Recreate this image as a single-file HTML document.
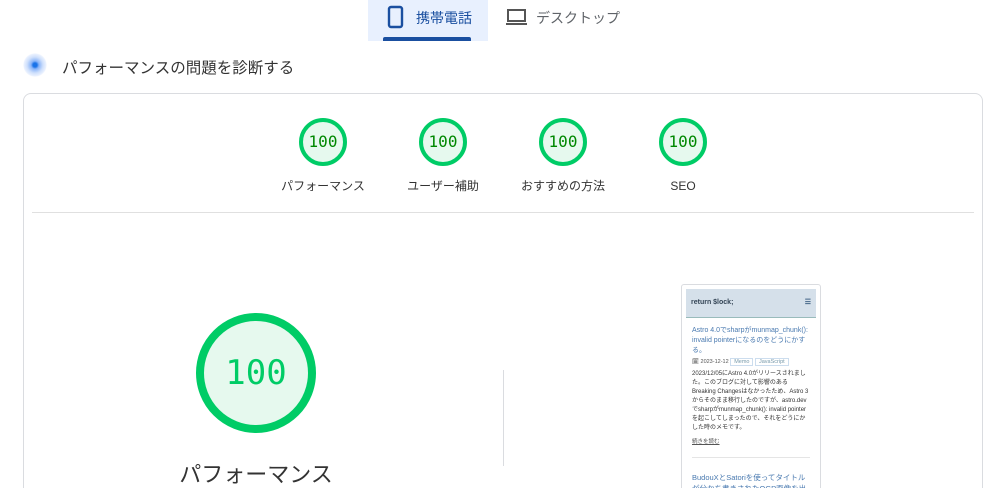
<!DOCTYPE html>
<html><head><meta charset="utf-8"><style>
html,body{margin:0;width:1003px;height:488px;overflow:hidden}
body{background:#fff;font-family:"Liberation Sans","Noto Sans CJK JP",sans-serif;position:relative;color:#202124}
.a{position:absolute}
.g{position:absolute;width:40px;height:40px;border:4px solid #0c6;border-radius:50%;background:#e6f9ee;color:#080;font-family:"DejaVu Sans Mono","Liberation Mono",monospace;font-size:16px;line-height:40px;text-align:center}
.lb{position:absolute;width:140px;text-align:center;font-size:12px;color:#333;top:178px;line-height:16px}
.sm{font-size:5.5px;color:#555;line-height:9px}
</style></head><body>
<div class="a" style="left:368px;top:0;width:120px;height:41px;background:#e8f0fe"></div>
<div class="a" style="left:383px;top:37px;width:88px;height:4px;background:#1a4fa0;border-radius:2px 2px 0 0"></div>
<svg class="a" style="left:386px;top:5px" width="20" height="24"><rect x="3" y="2" width="13" height="20" rx="2" fill="none" stroke="#1a4fa0" stroke-width="2.4"/></svg>
<div class="a" style="left:416px;top:8px;font-size:14px;color:#1a4fa0">携帯電話</div>
<svg class="a" style="left:505px;top:7px" width="24" height="20"><rect x="3" y="3" width="17" height="11" fill="none" stroke="#555" stroke-width="2"/><rect x="1" y="16" width="21" height="2" fill="#555"/></svg>
<div class="a" style="left:536px;top:8px;font-size:14px;color:#5f6368">デスクトップ</div>
<div class="a" style="left:23px;top:53px;width:24px;height:24px;border-radius:50%;background:radial-gradient(circle,#1a73e8 0,#1a73e8 2px,#8ab4f8 4px,#cfe0fc 8px,#eaf1fe 11px,#fff 12px)"></div>
<div class="a" style="left:62px;top:56px;font-size:15.5px;color:#333">パフォーマンスの問題を診断する</div>
<div class="a" style="left:23px;top:93px;width:958px;height:420px;border:1px solid #dadce0;border-radius:8px"></div>
<div class="g" style="left:299px;top:118px">100</div>
<div class="g" style="left:419px;top:118px">100</div>
<div class="g" style="left:539px;top:118px">100</div>
<div class="g" style="left:659px;top:118px">100</div>
<div class="lb" style="left:253px">パフォーマンス</div>
<div class="lb" style="left:373px">ユーザー補助</div>
<div class="lb" style="left:493px">おすすめの方法</div>
<div class="lb" style="left:613px">SEO</div>
<div class="a" style="left:32px;top:212px;width:942px;height:1px;background:#e0e0e0"></div>
<div class="a" style="left:196px;top:313px;width:104px;height:104px;border:8px solid #0c6;border-radius:50%;background:#e6f9ee;color:#0c6;font-family:'DejaVu Sans Mono','Liberation Mono',monospace;font-size:34px;line-height:104px;text-align:center">100</div>
<div class="a" style="left:156px;top:457px;width:200px;text-align:center;font-size:22px;color:#333">パフォーマンス</div>
<div class="a" style="left:503px;top:370px;width:1px;height:96px;background:#dadce0"></div>
<div class="a" style="left:681px;top:284px;width:138px;height:220px;border:1px solid #dadce0;border-radius:3px;overflow:hidden;background:#fff">
 <div style="height:28px;background:#d5e0ea;border-bottom:1px solid #9bb;margin:4px 4px 0;font-size:7px;font-weight:bold;color:#345;line-height:28px;padding-left:5px">return $lock;<span style="float:right;margin-right:5px;color:#468">☰</span></div>
 <div style="padding:8px 10px 0 10px">
  <div style="font-size:7px;color:#4a7ab0;line-height:10px">Astro 4.0でsharpがmunmap_chunk(): invalid pointerになるのをどうにかする。</div>
  <div class="sm" style="margin-top:2px">🗓 2023-12-12 <span style="border:1px solid #cde;color:#79a;padding:0 3px">Memo</span> <span style="border:1px solid #cde;color:#79a;padding:0 3px">JavaScript</span></div>
  <div class="sm" style="margin-top:3px;color:#333;font-size:6px">2023/12/05にAstro 4.0がリリースされました。このブログに対して影響のあるBreaking Changesはなかったため、Astro 3からそのまま移行したのですが、astro.devでsharpがmunmap_chunk(): invalid pointerを起こしてしまったので、それをどうにかした時のメモです。</div>
  <div class="sm" style="margin-top:5px;text-decoration:underline">続きを読む</div>
  <div style="height:1px;background:#e5e5e5;margin:10px 0 14px"></div>
  <div style="font-size:7.5px;color:#4a7ab0;line-height:11px">BudouXとSatoriを使ってタイトルが分かち書きされたOGP画像を出力する。</div>
 </div>
</div>
</body></html>
